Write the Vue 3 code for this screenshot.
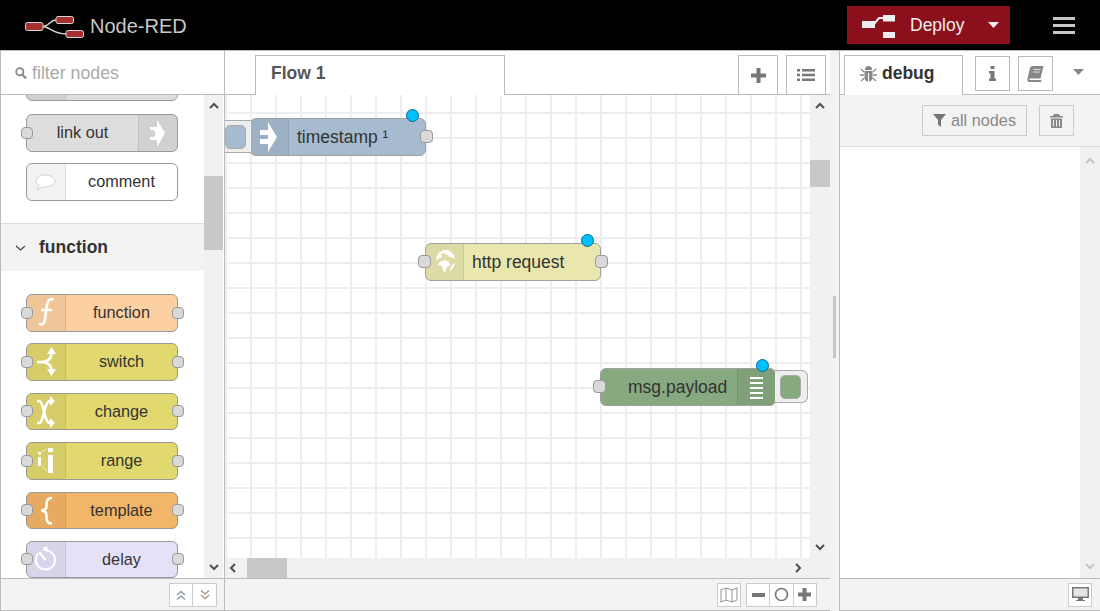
<script setup>
const icons = {
  linkout: [{ f: 'M19 6 27 19 19 33V26H12V23H15C18 23 18 16 15 16H12V13H19Z' }],
  comment: [{ s: 'M19 12C14 12 10 14.500 10 18C10 20 11.500 21.500 13 22.500L11 27 17 24C23 24.500 29 22 29 18C29 14.500 24 12 19 12Z', w: 1, c: '#d0d0d0' }],
  func: [{ s: 'M27.500 5.500C23 4 21.500 7 20.800 12L19 25C18 30.500 15.500 31.500 13 29.500M15 16H26', w: 2.6 }],
  switch: [{ s: 'M11 19H15C20 19 25.500 17 25.500 10M15 19C20 19 25.500 21 25.500 28', w: 2.6 }, { f: 'M25.500 4 30 11H21ZM25.500 33 30 26H21Z' }],
  change: [{ s: 'M11 8H13C18 8 18 30 24 30H25M11 30H13C18 30 18 8 24 8H25', w: 2.6 }, { f: 'M24 3 29 8 24 13ZM24 25 29 30 24 35Z' }],
  range: [{ f: 'M12 10h3v2.500h-3zM12 15h3v9h-3zM22 6h5v4h-5zM22 13h5v18h-5z' }, { s: 'M16 10 21 7M16 24 21 29', w: 1, o: 0.6 }],
  template: [{ s: 'M26 6C21 6 20.500 9 20.500 13.500C20.500 17 19.500 18 15.500 18.500C19.500 19.500 20.500 20 20.500 24C20.500 29 21 31.500 26 31.500', w: 2.6 }],
  delay: [{ s: 'M19.500 9.500A9.500 9.500 0 1 1 12.500 12.500M19.500 19 13 11', w: 2 }, { f: 'M17.500 6h4v4h-4z' }],
  inject: [{ f: 'M18 4 27 19 18 34V26H10V21H18V17H10V12H18Z' }],
  globe: [{ f: 'M21 7C26 7 29.500 11 30 16L26 14C24 15 25 13 22 12L19 10 16 11 17 14 13 16 11 18C11 12 15 7 21 7ZM14 19 20 17 24 19 25 22 22 24 20 29 18 28 17 23 13 22ZM27 22 30 20C29 24 27 27 24 28Z' }],
  debug: [{ f: 'M13 9h13v2h-13zM13 14h13v2h-13zM13 19h13v2h-13zM13 24h13v2h-13zM13 29h13v2h-13z' }]
}
const top = [
  { name: 'link out', cls: 'link', icon: 'linkout', input: true, iconRight: true },
  { name: 'comment', cls: 'comment', icon: 'comment' }
]
const fnNodes = [
  { name: 'function', cls: 'fn', icon: 'func' },
  { name: 'switch', cls: 'yellow', icon: 'switch' },
  { name: 'change', cls: 'yellow', icon: 'change' },
  { name: 'range', cls: 'yellow', icon: 'range' },
  { name: 'template', cls: 'tpl', icon: 'template' },
  { name: 'delay', cls: 'delay', icon: 'delay' }
]
const flow = [
  { id: 'a', label: 'timestamp ¹', x: 250, y: 118, cls: 'inj', icon: 'inject', out: true },
  { id: 'b', label: 'http request', x: 425, y: 243, cls: 'http', icon: 'globe', input: true, out: true },
  { id: 'c', label: 'msg.payload', x: 600, y: 368, cls: 'dbg', icon: 'debug', input: true, right: true }
]
const nodeStyle = n => ({ left: n.x - 225 + 'px', top: n.y - 95 + 'px' })
</script>

<template>
  <div class="app">
    <header class="top">
      <div class="brand">
        <svg class="logo" width="60" height="24" viewBox="0 0 60 24">
          <path d="M18 11.500C24 11.500 25 5 31 5M18 11.500C24 11.500 28 19 41 19" fill="none" stroke="#d8d8d8" stroke-width="1.500" />
          <rect x="0.500" y="7.500" width="17.500" height="8" rx="2" fill="#a6302f" stroke="#d8d8d8" />
          <rect x="31" y="1.500" width="17.500" height="7" rx="2" fill="#a6302f" stroke="#d8d8d8" />
          <rect x="41" y="15.500" width="17.500" height="7" rx="2" fill="#a6302f" stroke="#d8d8d8" />
        </svg>
        <span>Node-RED</span>
      </div>
      <button class="deploy">
        <svg class="dep-ic" width="33" height="23" viewBox="0 0 33 23"><path fill="#eee" d="M0 6h13v7H0zM21 0h12v6.500H21zM21 17h12v6H21z" /><path d="M12 9 17 3H21" fill="none" stroke="#eee" stroke-width="2" /></svg>
        <span>Deploy</span>
        <svg class="caret" width="11" height="6" viewBox="0 0 11 6"><path d="M0 0H11L5.500 6Z" fill="#eee" /></svg>
      </button>
      <div class="burger"><i></i><i></i><i></i></div>
    </header>

    <main class="main">
      <aside class="palette">
        <div class="filter">
          <svg width="12" height="13" viewBox="0 0 12 13"><circle cx="4.800" cy="4.800" r="3.600" fill="none" stroke="#888" stroke-width="1.800" /><path d="M7.500 7.800 11 11.500" stroke="#888" stroke-width="2.200" /></svg>
          <span>filter nodes</span>
        </div>
        <div class="pal-body">
          <div class="pal-list">
            <div class="p-node link cut"><div class="ic"></div></div>
            <div v-for="n in top" :key="n.name" class="p-node" :class="n.cls">
              <div v-if="!n.iconRight" class="ic">
                <svg width="39" height="38" viewBox="0 0 39 38"><template v-for="(p, i) in icons[n.icon]" :key="i"><path v-if="p.f" :d="p.f" fill="#fff" /><path v-else :d="p.s" fill="#fff" :stroke="p.c || '#fff'" :stroke-width="p.w" /></template></svg>
              </div>
              <span class="p-label">{{ n.name }}</span>
              <div v-if="n.iconRight" class="ic r">
                <svg width="39" height="38" viewBox="0 0 39 38"><path :d="icons[n.icon][0].f" fill="#fff" /></svg>
              </div>
              <i v-if="n.input" class="port l"></i>
            </div>
            <div class="cat"><svg width="11" height="6" viewBox="0 0 11 6"><path d="M1 1 5.500 5 10 1" fill="none" stroke="#444" stroke-width="1.200" /></svg><b>function</b></div>
            <div class="fn-list">
              <div v-for="n in fnNodes" :key="n.name" class="p-node" :class="n.cls">
                <div class="ic">
                  <svg width="39" height="38" viewBox="0 0 39 38"><template v-for="(p, i) in icons[n.icon]" :key="i"><path v-if="p.f" :d="p.f" fill="#fff" /><path v-else :d="p.s" fill="none" stroke="#fff" :stroke-width="p.w" :opacity="p.o || 1" /></template></svg>
                </div>
                <span class="p-label">{{ n.name }}</span>
                <i class="port l"></i><i class="port r"></i>
              </div>
            </div>
          </div>
          <div class="vbar pal-bar">
            <svg class="chev" width="10" height="7" viewBox="0 0 10 7"><path d="M1 6 5 2 9 6" fill="none" stroke="#505050" stroke-width="2" /></svg>
            <div class="thumb t1"></div>
            <svg class="chev" width="10" height="7" viewBox="0 0 10 7"><path d="M1 1 5 5 9 1" fill="none" stroke="#505050" stroke-width="2" /></svg>
          </div>
        </div>
        <footer class="foot pal-foot">
          <div class="grp">
            <button class="fb"><svg width="12" height="12" viewBox="0 0 12 12"><path d="M2 6 6 2.500 10 6M2 10.500 6 7 10 10.500" fill="none" stroke="#8a9aa8" stroke-width="1.400" /></svg></button>
            <button class="fb"><svg width="12" height="12" viewBox="0 0 12 12"><path d="M2 1.500 6 5 10 1.500M2 6 6 9.500 10 6" fill="none" stroke="#a89a7a" stroke-width="1.400" /></svg></button>
          </div>
        </footer>
      </aside>

      <section class="work">
        <div class="tabs">
          <div class="tab"><b>Flow 1</b></div>
          <div class="spacer"></div>
          <button class="tb"><svg width="15" height="15" viewBox="0 0 15 15"><path d="M5.500 0h4v5.500H15v4H9.500V15h-4V9.500H0v-4h5.500z" fill="#777" /></svg></button>
          <button class="tb"><svg width="18" height="14" viewBox="0 0 18 14"><path d="M0 1h3v2.500H0zM5 1h13v2.500H5zM0 5.700h3v2.500H0zM5 5.700h13v2.500H5zM0 10.500h3V13H0zM5 10.500h13V13H5z" fill="#777" /></svg></button>
        </div>
        <div class="view">
          <div class="canvas">
            <div v-for="n in flow" :key="n.id" class="c-node" :class="[n.cls, { rt: n.right }]" :style="nodeStyle(n)">
              <div v-if="n.cls === 'inj'" class="trig left"><i></i></div>
              <div v-if="n.right" class="trig right"><i></i></div>
              <div v-if="!n.right" class="ic"><svg width="39" height="38" viewBox="0 0 39 38"><path :d="icons[n.icon][0].f" fill="#fff" /></svg></div>
              <span class="c-label">{{ n.label }}</span>
              <div v-if="n.right" class="ic r"><svg width="39" height="38" viewBox="0 0 39 38"><path :d="icons[n.icon][0].f" fill="#fff" /></svg></div>
              <i v-if="n.input" class="port cl"></i>
              <i v-if="n.out" class="port cr"></i>
              <i class="dot"></i>
            </div>
          </div>
          <div class="vbar cv-bar">
            <svg class="chev" width="10" height="7" viewBox="0 0 10 7"><path d="M1 6 5 2 9 6" fill="none" stroke="#505050" stroke-width="2" /></svg>
            <div class="thumb t2"></div>
            <svg class="chev" width="10" height="7" viewBox="0 0 10 7"><path d="M1 1 5 5 9 1" fill="none" stroke="#505050" stroke-width="2" /></svg>
          </div>
          <div class="hbar">
            <svg width="7" height="10" viewBox="0 0 7 10"><path d="M6 1 2 5 6 9" fill="none" stroke="#505050" stroke-width="2" /></svg>
            <div class="thumb t3"></div>
            <svg width="7" height="10" viewBox="0 0 7 10"><path d="M1 1 5 5 1 9" fill="none" stroke="#505050" stroke-width="2" /></svg>
          </div>
          <div class="corner"></div>
        </div>
        <footer class="foot work-foot">
          <button class="fb map"><svg width="18" height="16" viewBox="0 0 18 16"><path d="M1 3 6 1 12 3 17 1V13L12 15 6 13 1 15ZM6 1V13M12 3V15" fill="none" stroke="#a09a94" stroke-width="1.100" /></svg></button>
          <div class="grp zoom">
            <button class="fb"><svg width="13" height="4" viewBox="0 0 13 4"><path d="M0 0h13v4H0z" fill="#777" /></svg></button>
            <button class="fb"><svg width="15" height="15" viewBox="0 0 15 15"><circle cx="7.500" cy="7.500" r="6" fill="none" stroke="#777" stroke-width="1.700" /></svg></button>
            <button class="fb"><svg width="13" height="13" viewBox="0 0 13 13"><path d="M4.500 0h4v4.500H13v4H8.500V13h-4V8.500H0v-4h4.500z" fill="#777" /></svg></button>
          </div>
        </footer>
      </section>

      <div class="sep"><i></i></div>

      <aside class="side">
        <div class="side-tabs">
          <div class="side-tab">
            <svg width="17" height="17" viewBox="0 0 17 17"><path d="M5 5C5 2 6.500 1 8.500 1S12 2 12 5ZM4.500 6h8v6c0 3-1.800 4.500-3.500 4.500V8H8v8.500c-1.800 0-3.500-1.500-3.500-4.500Z" fill="#888" /><path d="M1 4 4 7M16 4 13 7M0 10H4M17 10H13M1 16 4.500 13M16 16 12.500 13" stroke="#888" stroke-width="1.300" /></svg>
            <b>debug</b>
          </div>
          <button class="st info"><svg width="9" height="15" viewBox="0 0 9 15"><path d="M2.500 0h4v3h-4zM1 5h5.500v7.500H8V15H1v-2.500h1.500V7.500H1z" fill="#777" /></svg></button>
          <button class="st"><svg width="17" height="16" viewBox="0 0 17 16"><path d="M5 0H16.500L13.500 12.500H3C2 12.500 2 14 3 14H14.500L14 16H2.500C.5 16 0 14.500.5 12.500L3 2C3.300 1 4 0 5 0Z" fill="#888" /><path d="M6.500 3.500H13.500M6 6H13" stroke="#ddd" stroke-width="1" /></svg></button>
          <svg class="side-caret" width="11" height="6" viewBox="0 0 11 6"><path d="M0 0H11L5.500 6Z" fill="#888" /></svg>
        </div>
        <div class="side-tool">
          <button class="sb allnodes"><svg width="13" height="13" viewBox="0 0 13 13"><path d="M0 0H13L8 6V13L5 10.500V6Z" fill="#777" /></svg><span>all nodes</span></button>
          <button class="sb trash"><svg width="13" height="14" viewBox="0 0 13 14"><path d="M4 0h5l1 2h3v1.500H0V2h3ZM1 4.500h11V14H1Z" fill="#888" /><path d="M3.500 6v6.500M6.500 6v6.500M9.500 6v6.500" stroke="#f3f3f3" stroke-width="1" /></svg></button>
        </div>
        <div class="side-body">
          <div class="spacer"></div>
          <div class="vbar side-bar">
            <svg class="chev" width="10" height="7" viewBox="0 0 10 7"><path d="M1 6 5 2 9 6" fill="none" stroke="#c5c5c5" stroke-width="2" /></svg>
            <svg class="chev" width="10" height="7" viewBox="0 0 10 7"><path d="M1 1 5 5 9 1" fill="none" stroke="#c5c5c5" stroke-width="2" /></svg>
          </div>
        </div>
        <footer class="foot side-foot">
          <button class="fb mon"><svg width="17" height="15" viewBox="0 0 17 15"><path d="M0 0H17V11H0ZM6 11H11V13H13V14H4V13H6Z" fill="#777" /><path d="M1.500 1.500H15.500V9.500H1.500Z" fill="#e4e4e4" /></svg></button>
        </footer>
      </aside>
    </main>
  </div>
</template>

<style scoped>
.app { width: 1100px; height: 611px; display: flex; flex-direction: column; overflow: hidden; font-family: "Liberation Sans", Arial, sans-serif; color: #333; background: #fff; }
button { padding: 0; margin: 0; font: inherit; cursor: pointer; display: flex; align-items: center; justify-content: center; background: #fff; }
i { display: block; }
.spacer { flex: 1; }

.top { height: 50px; flex: none; background: #000; display: flex; align-items: center; box-sizing: border-box; }
.brand { display: flex; align-items: center; color: #c7c7c7; font-size: 20px; margin-left: 25px; flex: 1; }
.logo { margin-right: 5px; margin-top: 4px; }
.brand span { margin-top: 3px; }
.deploy { width: 163px; height: 38px; background: #8c101c; border: none; color: #eee; font-size: 17.5px; justify-content: flex-start; padding-left: 15px; margin-right: 43px; }
.dep-ic { margin-top: 3px; }
.deploy span { margin-left: 15px; }
.caret { margin-left: 24px; }
.burger { width: 22px; margin-right: 25px; display: flex; flex-direction: column; gap: 3.500px; padding-top: 1px; }
.burger i { height: 3.500px; background: #c7c7c7; }

.main { flex: 1; display: flex; min-height: 0; border-top: 1px solid #bbb; }
.palette { width: 225px; flex: none; box-sizing: border-box; border-left: 1px solid #bbb; border-right: 1px solid #bbb; display: flex; flex-direction: column; background: #fff; }
.filter { height: 44px; box-sizing: border-box; border-bottom: 1px solid #bbb; display: flex; align-items: center; padding: 2px 0 0 14px; gap: 5px; color: #aaa; font-size: 17.8px; flex: none; }
.pal-body { flex: 1; display: flex; min-height: 0; overflow: hidden; }
.pal-list { width: 203px; flex: none; margin-top: -31.500px; }

.p-node { position: relative; width: 152px; height: 37.500px; box-sizing: border-box; margin-left: 25px; border: 1px solid #999; border-radius: 6px; display: flex; font-size: 16.250px; color: #333; }
.ic { width: 39px; flex: none; background: rgba(0, 0, 0, 0.05); border-right: 1px solid rgba(0, 0, 0, 0.08); box-sizing: border-box; border-radius: 5px 0 0 5px; overflow: hidden; }
.ic.r { border-right: none; border-left: 1px solid rgba(0, 0, 0, 0.08); border-radius: 0 5px 5px 0; }
.ic svg { display: block; margin: -1px 0 0 -1px; }
.p-label { flex: 1; text-align: center; line-height: 35.500px; }
.port { position: absolute; width: 12px; height: 12px; box-sizing: border-box; background: #d9d9d9; border: 1px solid #999; border-radius: 4px; top: 11.500px; }
.port.l { left: -6px; }
.port.r { right: -7px; }
.link { background: #ddd; margin-top: 13px; }
.cut { margin-top: 0; }
.comment { background: #fff; margin-top: 11.500px; }
.cat { height: 48px; margin-top: 22.500px; box-sizing: border-box; border-top: 1px solid #ddd; background: #f3f3f3; display: flex; align-items: center; font-size: 17.5px; color: #333; padding-left: 14px; gap: 13px; }
.fn-list { padding-top: 23px; display: flex; flex-direction: column; gap: 11.900px; }
.fn { background: #fdd0a2; }
.yellow { background: #e2d96e; }
.tpl { background: #f3b567; }
.delay { background: #e6e0f8; }

.vbar { width: 20px; flex: none; background: #f1f1f1; position: relative; display: flex; flex-direction: column; align-items: center; justify-content: space-between; padding: 7px 0; box-sizing: border-box; }
.thumb { position: absolute; background: #c8c8c8; }
.pal-bar { width: 19px; }
.t1 { left: 0; right: 0; top: 81px; height: 74px; }
.t2 { left: 0; right: 0; top: 65px; height: 27px; }
.t3 { top: 0; bottom: 0; left: 22px; width: 40px; }

.foot { height: 33px; flex: none; box-sizing: border-box; border-top: 1px solid #bbb; border-bottom: 1px solid #bbb; background: #f3f3f3; display: flex; align-items: center; justify-content: flex-end; }
.grp { display: flex; }
.fb { width: 24px; height: 24px; box-sizing: border-box; border: 1px solid #ccc; background: #fff; }
.grp .fb + .fb { border-left: none; }
.pal-foot { padding-right: 7px; }

.work { width: 605px; flex: none; display: flex; flex-direction: column; min-width: 0; }
.tabs { height: 44px; flex: none; box-sizing: border-box; border-bottom: 1px solid #bbb; display: flex; align-items: flex-end; padding-left: 30px; padding-right: 4px; }
.tab { width: 250px; height: 40px; box-sizing: border-box; border: 1px solid #bbb; border-bottom: none; background: #fff; padding-left: 15px; font-size: 17.5px; color: #555; line-height: 34px; margin-bottom: -1px; }
.tb { width: 40px; height: 39px; box-sizing: border-box; border: 1px solid #bbb; border-bottom: none; background: #fff; margin-left: 8px; }
.view { flex: 1; min-height: 0; display: grid; grid-template-columns: 585px 20px; grid-template-rows: 463px 20px; }
.canvas { position: relative; overflow: hidden; background-color: #fff; background-image: linear-gradient(#eee 2px, transparent 2px), linear-gradient(90deg, #eee 2px, transparent 2px); background-size: 25px 25px; background-repeat: repeat; background-position: 0 17px, 0 0; }
.cv-bar { width: 20px; }
.hbar { position: relative; background: #f1f1f1; display: flex; align-items: center; justify-content: space-between; padding: 0 8px 0 4px; }
.corner { background: #f1f1f1; }
.work-foot { padding-right: 13px; gap: 5px; }
.zoom .fb { width: 23.500px; }
.zoom .fb:first-child { width: 24px; }
.map { width: 24px; }

.c-node { position: absolute; width: 176px; height: 38px; box-sizing: border-box; border: 1px solid #a0a0a0; border-radius: 6px; display: flex; font-size: 17.500px; color: #333; }
.c-node .ic { width: 38px; }
.c-label { flex: 1; line-height: 36px; padding-left: 8px; white-space: nowrap; }
.rt .c-label { padding-left: 27px; }
.inj { background: #a6bbcf; }
.http { background: #e9e7ae; }
.dbg { background: #87a980; }
.port.cl { width: 13px; height: 13px; left: -8px; top: 11px; }
.port.cr { width: 13px; height: 13px; right: -8px; top: 11px; }
.dot { position: absolute; width: 13px; height: 13px; box-sizing: border-box; background: #00bfff; border: 1px solid #0a6a8a; border-radius: 50%; right: 6px; top: -10px; }
.trig { position: absolute; background: #eee; border: 1px solid #aaa; box-sizing: border-box; display: flex; align-items: center; top: 1px; height: 33px; }
.trig i { border: 1px solid #aaa; border-radius: 5px; box-sizing: border-box; width: 21px; height: 24px; }
.trig.left { left: -33px; width: 33px; border-right: none; justify-content: flex-end; padding-right: 5px; }
.inj .trig i { background: #a6bbcf; }
.trig.right { right: -33px; width: 33px; border-left: none; border-radius: 0 6px 6px 0; justify-content: flex-start; padding-left: 5px; }
.dbg .trig i { background: #87a980; }

.sep { width: 9px; flex: none; background: #f3f3f3; position: relative; }
.sep i { position: absolute; left: 3px; top: 245px; width: 3px; height: 62px; background: #c8c8c8; }

.side { flex: 1; min-width: 0; box-sizing: border-box; border-left: 1px solid #bbb; display: flex; flex-direction: column; background: #fff; }
.side-tabs { height: 44px; flex: none; box-sizing: border-box; border-bottom: 1px solid #bbb; display: flex; align-items: flex-start; padding-left: 4px; padding-top: 4px; position: relative; }
.side-tab { width: 119px; height: 40px; box-sizing: border-box; border: 1px solid #bbb; border-bottom: none; background: #fff; display: flex; align-items: center; padding: 0 0 4px 15px; gap: 5px; font-size: 17.5px; color: #333; position: relative; z-index: 1; }
.st { width: 35px; height: 35px; box-sizing: border-box; border: 1px solid #bbb; background: #fff; margin-top: 1px; margin-left: 8px; }
.info { margin-left: 12px; }
.side-caret { margin: 14px 0 0 20px; }
.side-tool { height: 52px; flex: none; box-sizing: border-box; border-bottom: 1px solid #ddd; background: #f3f3f3; display: flex; align-items: flex-start; justify-content: flex-end; padding: 10px 26px 0 0; gap: 12px; }
.sb { height: 31px; box-sizing: border-box; border: 1px solid #ccc; background: #f3f3f3; color: #888; font-size: 16.250px; }
.allnodes { width: 105px; gap: 5px; }
.trash { width: 35px; }
.side-body { flex: 1; display: flex; min-height: 0; }
.side-bar { padding: 10px 0 8px; }
.side-foot { padding-right: 8px; }
.mon { width: 24px; height: 24px; }
</style>
